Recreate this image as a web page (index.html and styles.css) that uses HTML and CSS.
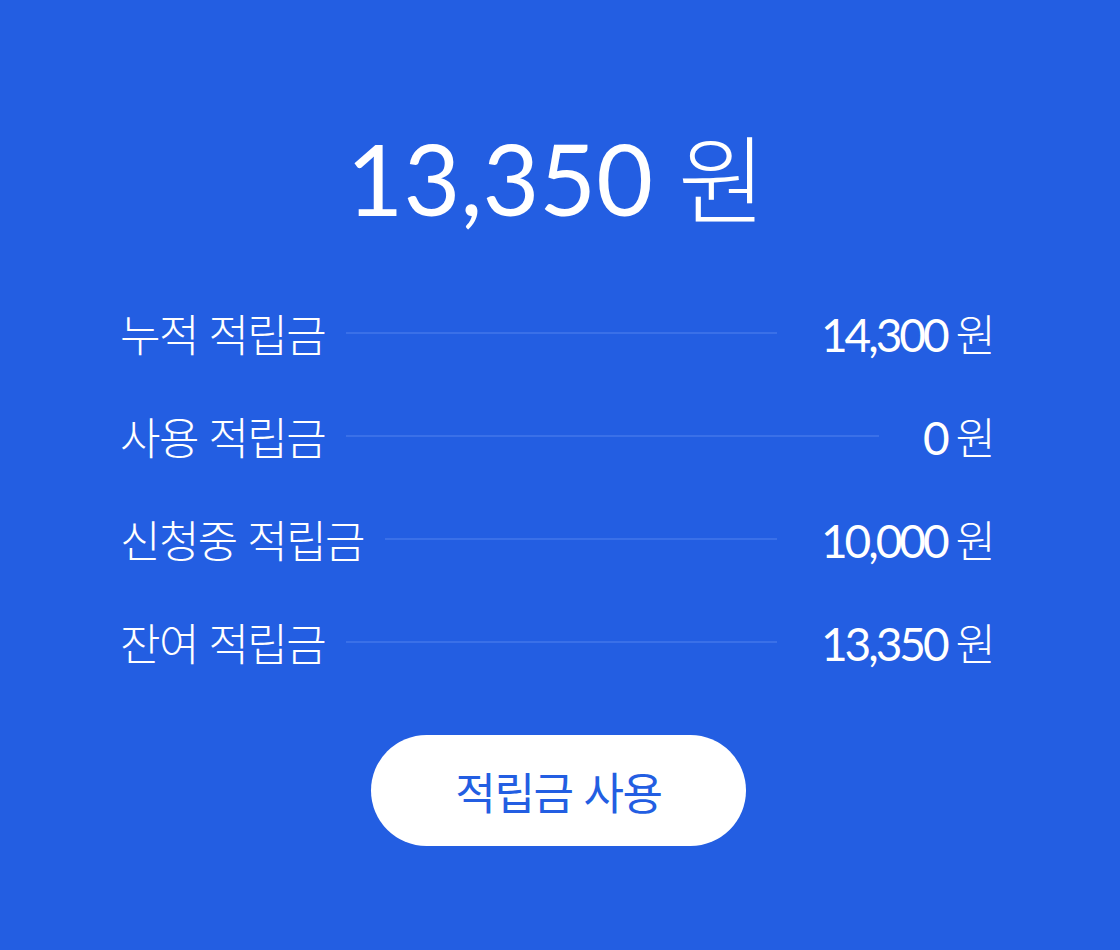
FILE: index.html
```html
<!DOCTYPE html>
<html lang="ko">
<head>
    <meta charset="UTF-8">
    <meta name="viewport" content="width=device-width, initial-scale=1.0">
    <title>적립금</title>
    <link rel="stylesheet" href="styles.css">
</head>
<body>

<div class="point-box">
    <div class="total">13,350 <span class="unit">원</span></div>

    <ul class="point-list">
        <li class="point-row">
            <span class="label">누적 적립금</span>
            <span class="dots"></span>
            <span class="value">14,300 <span class="unit">원</span></span>
        </li>
        <li class="point-row">
            <span class="label">사용 적립금</span>
            <span class="dots"></span>
            <span class="value">0 <span class="unit">원</span></span>
        </li>
        <li class="point-row">
            <span class="label">신청중 적립금</span>
            <span class="dots"></span>
            <span class="value">10,000 <span class="unit">원</span></span>
        </li>
        <li class="point-row">
            <span class="label">잔여 적립금</span>
            <span class="dots"></span>
            <span class="value">13,350 <span class="unit">원</span></span>
        </li>
    </ul>

    <button class="use-btn">적립금 사용</button>
</div>

</body>
</html>
```

FILE: styles.css
```css
body {
    margin: 0;
    padding: 0;
    background-color: #235ee2;
    color: #fff;
    font-family: Lato, "Noto Sans CJK KR", sans-serif;
}
.point-box {
    width: 871px;
    margin: 0 0 0 120px;
    padding-top: 118px;
    display: flex;
    flex-direction: column;
    align-items: center;
}
.total {
    font-size: 98px;
    line-height: 114px;
    font-weight: 400;
    margin-left: 2px;
}
.total .unit {
    font-family: "Noto Sans CJK KR", sans-serif;
    font-size: 96px;
    font-weight: 300;
}
.point-list {
    list-style: none;
    margin: 46px 0 0;
    padding: 0;
    width: 100%;
}
.point-row {
    display: flex;
    align-items: center;
    height: 103px;
}
.label {
    font-family: "Noto Sans CJK KR", sans-serif;
    font-weight: 300;
    font-size: 44px;
    letter-spacing: -1.6px;
}
.dots {
    flex: 1;
    height: 2px;
    background-color: #3a70e8;
    margin: 0 44px 0 21px;
}
.value {
    font-size: 46px;
    font-weight: 400;
    letter-spacing: -3px;
    margin-right: -5px;
}
.value .unit {
    font-family: "Noto Sans CJK KR", sans-serif;
    font-weight: 300;
    font-size: 44px;
    letter-spacing: 0;
}
.use-btn {
    margin-top: 42px;
    margin-left: 6px;
    width: 375px;
    height: 111px;
    border: none;
    border-radius: 56px;
    background-color: #fff;
    color: #235ee2;
    font-family: "Noto Sans CJK KR", sans-serif;
    font-size: 44px;
    letter-spacing: -1.4px;
    cursor: pointer;
}
```
